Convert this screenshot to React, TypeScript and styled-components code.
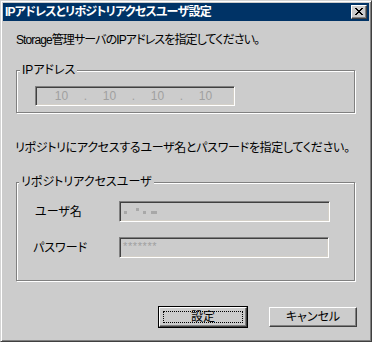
import React from "react";
import styled, { createGlobalStyle } from "styled-components";

const Global = createGlobalStyle`
  html, body { margin: 0; padding: 0; background: #cccccc; }
  body {
    font-family: "Liberation Sans", "Noto Sans CJK JP", sans-serif;
    font-size: 12px;
    color: #000;
  }
  * { box-sizing: border-box; }
`;

const Window = styled.div`
  width: 372px;
  height: 342px;
  border: 1px solid;
  border-color: #d4d4d4 #404040 #404040 #d4d4d4;
  box-shadow: inset 1px 1px 0 #fff, inset -1px -1px 0 #808080;
  padding: 2px;
  background: #cccccc;
  display: flex;
  flex-direction: column;
`;

const TitleBar = styled.div`
  height: 18px;
  flex: none;
  background: #003366;
  display: flex;
  align-items: center;
  justify-content: space-between;
  padding: 0 2px;
`;

const Title = styled.span`
  color: #fff;
  font-weight: bold;
  font-size: 12px;
  line-height: 14px;
  font-feature-settings: "palt";
  letter-spacing: -0.8px;
  white-space: nowrap;
`;

const CloseButton = styled.div`
  width: 16px;
  height: 14px;
  background: #cccccc;
  border-top: 1px solid #fff;
  border-left: 1px solid #fff;
  border-right: 1px solid #404040;
  border-bottom: 1px solid #404040;
  box-shadow: inset -1px -1px 0 #808080;
  display: flex;
  align-items: center;
  justify-content: center;
  padding-right: 1px;
  padding-bottom: 1px;
`;

const Body = styled.div`
  display: flex;
  flex-direction: column;
  padding: 12px 13px 0 13px;
`;

const Text = styled.div<{ $mt?: number; $ml?: number; $ls?: number }>`
  line-height: 14px;
  font-feature-settings: "palt";
  white-space: nowrap;
  letter-spacing: ${(p) => p.$ls ?? 0}px;
  margin-top: ${(p) => p.$mt ?? 0}px;
  margin-left: ${(p) => p.$ml ?? 0}px;
`;

const Group = styled.div<{ $mt: number; $h: number; $pt: number }>`
  position: relative;
  width: 339px;
  height: ${(p) => p.$h}px;
  margin-top: ${(p) => p.$mt}px;
  border: 1px solid #808080;
  box-shadow: inset 1px 1px 0 #fff, 1px 1px 0 #fff;
  padding: ${(p) => p.$pt}px 0 0 18px;
`;

const Legend = styled.span<{ $left: number }>`
  position: absolute;
  top: -8px;
  left: ${(p) => p.$left}px;
  padding: 0 2px;
  background: #cccccc;
  line-height: 14px;
  font-feature-settings: "palt";
  white-space: nowrap;
`;

const Sunken = styled.div<{ $w: number }>`
  width: ${(p) => p.$w}px;
  height: 21px;
  border-top: 1px solid #808080;
  border-left: 1px solid #808080;
  border-right: 1px solid #fff;
  border-bottom: 1px solid #fff;
  box-shadow: inset 1px 1px 0 #404040, inset -1px -1px 0 #d4d0c8;
  display: flex;
  align-items: center;
`;

const IpBox = styled(Sunken)`
  height: 20px;
  padding-left: 4px;
`;

const Octet = styled.span`
  width: 43px;
  text-align: center;
  color: #a0a0a0;
  font-family: "Liberation Sans", sans-serif;
  font-size: 12px;
  line-height: 14px;
`;

const Dot = styled.span`
  width: 5px;
  text-align: center;
  color: #a0a0a0;
  font-family: "Liberation Sans", sans-serif;
  font-size: 12px;
  line-height: 14px;
`;

const FormGrid = styled.div`
  display: grid;
  grid-template-columns: 84px 211px;
  row-gap: 15px;
  align-items: center;
`;

const FieldLabel = styled.span<{ $ml?: number }>`
  line-height: 14px;
  font-feature-settings: "palt";
  white-space: nowrap;
  margin-left: ${(p) => p.$ml ?? 0}px;
`;

const Masked = styled.div`
  display: flex;
  align-items: flex-end;
  height: 100%;
  padding: 0 0 7px 4px;
`;

const Blot = styled.span<{ $w: number; $ml: number; $h?: number; $up?: number }>`
  display: inline-block;
  width: ${(p) => p.$w}px;
  height: ${(p) => p.$h ?? 3}px;
  margin-left: ${(p) => p.$ml}px;
  margin-bottom: ${(p) => p.$up ?? 0}px;
  background: #a8a8a8;
`;

const Stars = styled.span`
  color: #a0a0a0;
  font-family: "Liberation Sans", sans-serif;
  font-size: 11px;
  letter-spacing: 0.6px;
  line-height: 12px;
  padding-left: 3px;
  margin-top: -3px;
`;

const ButtonRow = styled.div`
  display: flex;
  justify-content: flex-end;
  align-items: center;
  gap: 21px;
  margin-top: 25px;
  margin-right: -1px;
  height: 22px;
`;

const Button = styled.div<{ $default?: boolean }>`
  width: ${(p) => (p.$default ? 90 : 88)}px;
  height: ${(p) => (p.$default ? 22 : 20)}px;
  border: ${(p) => (p.$default ? "1px solid #000" : "none")};
  display: flex;
`;

const Bevel = styled.div`
  flex: 1;
  display: flex;
  padding: 3px;
  border-top: 1px solid #fff;
  border-left: 1px solid #fff;
  border-right: 1px solid #404040;
  border-bottom: 1px solid #404040;
  box-shadow: inset -1px -1px 0 #808080;
`;

const Caption = styled.span<{ $focus?: boolean }>`
  flex: 1;
  display: flex;
  align-items: center;
  justify-content: center;
  border: 1px dotted ${(p) => (p.$focus ? "#000" : "transparent")};
  line-height: 14px;
  font-feature-settings: "palt";
  white-space: nowrap;
`;

const CloseGlyph = () => (
  <svg width="8" height="7" viewBox="0 0 8 7" shapeRendering="crispEdges">
    {[
      [0, 0], [6, 0], [1, 1], [5, 1], [2, 2], [4, 2], [3, 3], [2, 4], [4, 4], [1, 5], [5, 5], [0, 6], [6, 6],
    ].map(([x, y], i) => (
      <rect key={i} x={x} y={y} width={2} height={1} fill="#000" />
    ))}
  </svg>
);

export default function App() {
  return (
    <>
      <Global />
      <Window>
        <TitleBar>
          <Title>IPアドレスとリポジトリアクセスユーザ設定</Title>
          <CloseButton>
            <CloseGlyph />
          </CloseButton>
        </TitleBar>
        <Body>
          <Text $ls={-0.9}>Storage管理サーバのIPアドレスを指定してください。</Text>
          <Group $mt={23} $h={43} $pt={15}>
            <Legend $left={3}>IPアドレス</Legend>
            <IpBox $w={200}>
              <Octet>10</Octet>
              <Dot>.</Dot>
              <Octet>10</Octet>
              <Dot>.</Dot>
              <Octet>10</Octet>
              <Dot>.</Dot>
              <Octet>10</Octet>
            </IpBox>
          </Group>
          <Text $mt={28} $ml={-1} $ls={-0.3}>
            リポジトリにアクセスするユーザ名とパスワードを指定してください。
          </Text>
          <Group $mt={27} $h={99} $pt={18}>
            <Legend $left={2}>リポジトリアクセスユーザ</Legend>
            <FormGrid>
              <FieldLabel>ユーザ名</FieldLabel>
              <Sunken $w={211}>
                <Masked>
                  <Blot $w={3} $ml={0} />
                  <Blot $w={3} $ml={9} $up={3} />
                  <Blot $w={3} $ml={4} />
                  <Blot $w={6} $ml={5} />
                </Masked>
              </Sunken>
              <FieldLabel $ml={-2}>パスワード</FieldLabel>
              <Sunken $w={210}>
                <Stars>*******</Stars>
              </Sunken>
            </FormGrid>
          </Group>
          <ButtonRow>
            <Button $default>
              <Bevel>
                <Caption $focus>設定</Caption>
              </Bevel>
            </Button>
            <Button>
              <Bevel>
                <Caption>キャンセル</Caption>
              </Bevel>
            </Button>
          </ButtonRow>
        </Body>
      </Window>
    </>
  );
}
